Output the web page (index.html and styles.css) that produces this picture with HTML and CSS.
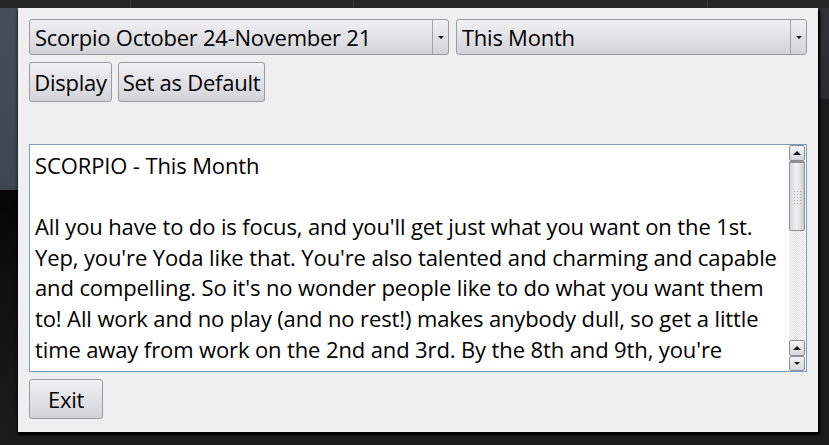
FILE: index.html
```html
<!DOCTYPE html>
<html>
<head>
<meta charset="utf-8">
<link rel="stylesheet" href="styles.css">
</head>
<body>
<div class="screen">
  <div class="topbar">
    <div class="seg seg1"></div>
    <div class="seg seg2"></div>
    <div class="seg seg3"></div>
    <div class="seg seg4"></div>
  </div>
  <div class="window">
    <div class="combos">
      <div class="combo combo-sign">
        <span class="combo-label">Scorpio October 24-November 21</span>
        <span class="combo-btn"><span class="tri-down"></span></span>
      </div>
      <div class="combo combo-period">
        <span class="combo-label">This Month</span>
        <span class="combo-btn"><span class="tri-down"></span></span>
      </div>
    </div>
    <div class="actions">
      <button class="btn btn-display">Display</button>
      <button class="btn btn-default">Set as Default</button>
    </div>
    <div class="textbox">
      <div class="text">
        <div class="line">SCORPIO - This Month</div>
        <div class="line">&nbsp;</div>
        <div class="line">All you have to do is focus, and you'll get just what you want on the 1st.</div>
        <div class="line">Yep, you're Yoda like that. You're also talented and charming and capable</div>
        <div class="line">and compelling. So it's no wonder people like to do what you want them</div>
        <div class="line">to! All work and no play (and no rest!) makes anybody dull, so get a little</div>
        <div class="line">time away from work on the 2nd and 3rd. By the 8th and 9th, you're</div>
      </div>
      <div class="scrollbar">
        <div class="sb-btn"><span class="tri-up"></span></div>
        <div class="sb-thumb">
          <div class="grip">
            <i></i><i></i><i></i><i></i><i></i><i></i><i></i><i></i><i></i><i></i><i></i><i></i><i></i><i></i><i></i>
          </div>
        </div>
        <div class="sb-track"></div>
        <div class="sb-btn sb-btn-up"><span class="tri-up"></span></div>
        <div class="sb-btn sb-btn-down"><span class="tri-down"></span></div>
      </div>
    </div>
    <div class="footer">
      <button class="btn btn-exit">Exit</button>
    </div>
  </div>
</div>
</body>
</html>
```
FILE: styles.css
```css
html, body {
  margin: 0;
  padding: 0;
}
body {
  width: 829px;
  height: 445px;
  overflow: hidden;
  font-family: "Open Sans", "Noto Sans", sans-serif;
  background-color: #1b1b1b;
  background-image:
    linear-gradient(180deg, #454e59 0px, #3d4550 185px, #3a424c 190px, rgba(0,0,0,0) 190px),
    linear-gradient(180deg, #2e3236 0px, #2a2d31 98px, rgba(0,0,0,0) 100px),
    linear-gradient(180deg, #060606 190px, #111 300px, #1c1c1c 445px);
  background-size: 18px 445px, 11px 100px, 18px 445px;
  background-position: 0 0, right 0 top 0, 0 0;
  background-repeat: no-repeat;
}
.screen {
  display: flex;
  flex-direction: column;
}
.topbar {
  height: 8px;
  display: flex;
  background: #242424;
}
.seg {
  height: 8px;
  border-right: 1px solid #3a3a3a;
}
.seg1 { width: 130px; }
.seg2 { width: 222px; }
.seg3 { width: 353px; }
.seg4 { flex: 1; border-right: none; }

.window {
  margin-left: 18px;
  width: 800px;
  height: 424px;
  box-sizing: border-box;
  background: #efefef;
  padding: 11px 11px 0 11px;
  box-shadow: 2px 2px 2px #000, 0 3px 3px #000;
  display: flex;
  flex-direction: column;
  color: #000;
  font-size: 22px;
  letter-spacing: -0.25px;
}

.combos {
  display: flex;
  gap: 7px;
  height: 36px;
}
.combo {
  box-sizing: border-box;
  height: 36px;
  border: 1px solid #9c9ca0;
  border-radius: 3px;
  background: linear-gradient(180deg, #f1f1f3 0%, #e2e2e6 50%, #d2d3d8 100%);
  display: flex;
  align-items: center;
}
.combo-sign { width: 420px; }
.combo-period { width: 351px; }
.combo-label {
  flex: 1;
  padding-left: 5px;
  line-height: 34px;
  white-space: nowrap;
}
.combo-btn {
  width: 15px;
  height: 34px;
  border-left: 1px solid #a3a3a7;
  display: flex;
  align-items: center;
  justify-content: center;
}
.tri-down {
  width: 0;
  height: 0;
  border-left: 3px solid transparent;
  border-right: 3px solid transparent;
  border-top: 3px solid #111;
}
.tri-up {
  width: 0;
  height: 0;
  border-left: 4px solid transparent;
  border-right: 4px solid transparent;
  border-bottom: 4px solid #111;
}

.actions {
  display: flex;
  gap: 6px;
  margin-top: 7px;
  height: 40px;
}
.btn {
  box-sizing: border-box;
  height: 40px;
  margin: 0;
  padding: 0;
  border: 1px solid #9c9ca0;
  border-radius: 3px;
  background: linear-gradient(180deg, #f1f1f3 0%, #e2e2e6 50%, #d2d3d8 100%);
  font-family: inherit;
  font-size: 22px;
  letter-spacing: -0.25px;
  color: #000;
  text-align: center;
  line-height: 38px;
}
.btn-display { width: 83px; }
.btn-default { width: 147px; }

.textbox {
  margin-top: 42px;
  height: 228px;
  box-sizing: border-box;
  border: 1px solid #7f9bb8;
  background: #fff;
  display: flex;
  overflow: hidden;
}
.text {
  flex: 1;
  padding: 5px 0 0 5px;
  overflow: hidden;
  letter-spacing: -0.12px;
}
.line {
  height: 30.6px;
  line-height: 30.6px;
  white-space: nowrap;
}
.scrollbar {
  width: 16px;
  margin-right: 1px;
  display: flex;
  flex-direction: column;
}
.sb-btn {
  box-sizing: border-box;
  height: 16px;
  border: 1px solid #8d8d92;
  border-radius: 2px;
  background: linear-gradient(180deg, #f4f4f6 0%, #d6d7dc 100%);
  display: flex;
  align-items: center;
  justify-content: center;
}
.sb-thumb {
  box-sizing: border-box;
  height: 70px;
  border: 1px solid #8d8d92;
  border-top: 2px solid #8d8d92;
  border-radius: 2px;
  background: linear-gradient(90deg, #d8d8dc 0%, #f0f0f2 45%, #e4e4e7 70%, #c8c9ce 100%);
  display: flex;
  align-items: center;
  justify-content: center;
}
.grip {
  display: grid;
  grid-template-columns: repeat(3, 1px);
  grid-auto-rows: 1px;
  column-gap: 2px;
  row-gap: 2px;
  margin-top: 2px;
}
.grip i {
  display: block;
  width: 1px;
  height: 1px;
  background: #a8a8ac;
}
.sb-track {
  flex: 1;
  background-color: #fff;
  background-image: repeating-conic-gradient(#dcdcdc 0 25%, #ffffff 0 50%);
  background-size: 2px 2px;
}
.sb-btn-down {
  height: 15px;
}

.footer {
  margin-top: 7px;
  display: flex;
}
.btn-exit { width: 74px; }
```
